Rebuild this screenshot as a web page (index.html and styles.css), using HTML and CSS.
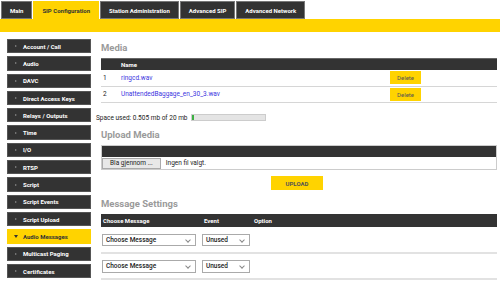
FILE: index.html
```html
<!DOCTYPE html>
<html lang="no">
<head>
    <meta charset="UTF-8">
    <title>SIP Configuration</title>
    <link rel="stylesheet" href="styles.css">
</head>
<body>
    <nav class="tabs">
        <a class="tab">Main</a>
        <a class="tab active">SIP Configuration</a>
        <a class="tab">Station Administration</a>
        <a class="tab">Advanced SIP</a>
        <a class="tab">Advanced Network</a>
    </nav>
    <div class="bar"></div>

    <div class="layout">
        <ul class="menu">
            <li>Account / Call</li>
            <li>Audio</li>
            <li>DAVC</li>
            <li>Direct Access Keys</li>
            <li>Relays / Outputs</li>
            <li>Time</li>
            <li>I/O</li>
            <li>RTSP</li>
            <li>Script</li>
            <li>Script Events</li>
            <li>Script Upload</li>
            <li class="active">Audio Messages</li>
            <li>Multicast Paging</li>
            <li>Certificates</li>
        </ul>

        <main class="content">
            <section class="block">
                <h2>Media</h2>
                <table class="grid">
                    <thead>
                        <tr><th class="num"></th><th>Name</th><th></th></tr>
                    </thead>
                    <tbody>
                        <tr>
                            <td class="num">1</td>
                            <td><a href="#">ringcd.wav</a></td>
                            <td class="act"><button class="btn">Delete</button></td>
                        </tr>
                        <tr>
                            <td class="num">2</td>
                            <td><a href="#">UnattendedBaggage_en_30_3.wav</a></td>
                            <td class="act"><button class="btn">Delete</button></td>
                        </tr>
                    </tbody>
                </table>
            </section>

            <div class="space">
                Space used: 0.505 mb of 20 mb
                <span class="meter"><span class="fill" style="width: 3%"></span></span>
            </div>

            <section class="block upload-block">
                <h2>Upload Media</h2>
                <div class="upload">
                    <div class="upload-head"></div>
                    <div class="upload-body">
                        <span class="browse">Bla gjennom ...</span>
                        <span class="nofile">Ingen fil valgt.</span>
                    </div>
                </div>
                <div class="upload-row"><button class="btn upload-btn">UPLOAD</button></div>
            </section>

            <section class="block">
                <h2>Message Settings</h2>
                <div class="msg-head">
                    <span class="c1">Choose Message</span>
                    <span class="c2">Event</span>
                    <span class="c3">Option</span>
                </div>
                <div class="msg-row">
                    <span class="select wide">Choose Message</span>
                    <span class="select narrow">Unused</span>
                </div>
                <div class="msg-row">
                    <span class="select wide">Choose Message</span>
                    <span class="select narrow">Unused</span>
                </div>
            </section>
        </main>
    </div>
</body>
</html>
```

FILE: styles.css
```css
:root {
    --yellow: #ffd300;
    --dark: #333333;
    --line: #d6d6d6;
}

* {
    margin: 0;
    padding: 0;
    box-sizing: border-box;
}

body {
    font-family: Roboto, 'Liberation Sans', sans-serif;
    font-size: 7px;
    color: #222;
    background: #fff;
    width: 500px;
    height: 284px;
    overflow: hidden;
}

.tabs {
    display: flex;
    gap: 1px;
    padding: 1px 0 0 1px;
    height: 19px;
}

.tab {
    display: flex;
    align-items: center;
    padding: 0 8px;
    height: 18px;
    background: var(--dark);
    color: #fff;
    font-weight: bold;
    font-size: 6px;
    border: 1px solid #777;
}

.tab.active {
    background: var(--yellow);
    color: #333;
    border-color: var(--yellow);
}

.bar {
    height: 13px;
    background: var(--yellow);
}

.layout {
    display: flex;
    padding: 7px 3px 0 7px;
}

.menu {
    list-style: none;
    width: 84px;
    display: flex;
    flex-direction: column;
    gap: 3px;
}

.menu li {
    height: 14.3px;
    background: var(--dark);
    border: 1px solid #555;
    color: #fff;
    font-weight: bold;
    font-size: 6px;
    display: flex;
    align-items: center;
    padding-left: 7px;
}

.menu li::before {
    content: "";
    border-left: 2px solid #888;
    border-top: 1.5px solid transparent;
    border-bottom: 1.5px solid transparent;
    margin-right: 6px;
}

.menu li.active {
    background: var(--yellow);
    border-color: var(--yellow);
    color: #333;
}

.menu li.active::before {
    border-left: 2px solid transparent;
    border-right: 2px solid transparent;
    border-top: 3px solid #333;
    border-bottom: 0;
    margin-left: -1px;
    margin-right: 5px;
}

.content {
    flex: 1;
    padding-left: 5px;
}

.block {
    padding-left: 5px;
}

h2 {
    font-size: 9.5px;
    color: #9a9a9a;
    font-weight: bold;
    height: 19px;
    padding-top: 3px;
}

.grid {
    width: 100%;
    border-collapse: collapse;
}

.grid th {
    background: var(--dark);
    color: #fff;
    font-size: 6px;
    text-align: left;
    height: 11px;
    border-top: 1px solid #666;
}

.grid td {
    height: 16.5px;
    border-bottom: 1px solid var(--line);
    font-size: 6.5px;
}

.grid .num {
    width: 20px;
    padding-left: 2px;
}

.grid a {
    color: #3b35e0;
    text-decoration: none;
}

.grid .act {
    width: 107px;
}

.btn {
    background: var(--yellow);
    border: none;
    font-family: inherit;
    font-size: 6px;
    color: #555;
    height: 13px;
    width: 31px;
}

.space {
    display: flex;
    align-items: center;
    gap: 3px;
    font-size: 6.5px;
    height: 15px;
    margin-top: 7px;
}

.meter {
    width: 75px;
    height: 7px;
    background: #e4e4e4;
    border: 1px solid #ccc;
    display: flex;
}

.fill {
    background: #3cb043;
    min-width: 1.5px;
}

.upload-block h2 {
    padding-top: 4px;
    height: 20px;
}

.upload {
    border: 1px solid #ccc;
}

.upload-head {
    height: 11px;
    background: var(--dark);
}

.upload-body {
    height: 12px;
    display: flex;
    align-items: center;
    gap: 5px;
}

.browse {
    background: #e8e8e8;
    border: 1px solid #aaa;
    height: 11px;
    padding: 0 7px;
    display: flex;
    align-items: center;
    font-size: 6.5px;
}

.nofile {
    font-size: 6.5px;
}

.upload-row {
    display: flex;
    justify-content: center;
    padding: 6px 4px 5px 0;
}

.upload-btn {
    width: 52px;
    height: 14px;
    font-weight: bold;
}

.msg-head {
    display: flex;
    background: var(--dark);
    color: #fff;
    font-weight: bold;
    font-size: 6px;
    height: 13px;
    align-items: center;
    padding-left: 2px;
}

.msg-head .c1 { width: 101px; }
.msg-head .c2 { width: 50px; }

.msg-row {
    display: flex;
    gap: 6px;
    align-items: center;
    height: 26.5px;
    padding: 1px 1px 0;
    border-bottom: 2px solid #e2e2e2;
}

.select {
    height: 12.5px;
    border: 1px solid #aaa;
    display: flex;
    align-items: center;
    padding-left: 3px;
    font-size: 6.5px;
    font-weight: 500;
    position: relative;
}

.select::after {
    content: "";
    position: absolute;
    right: 5px;
    top: 3px;
    width: 3px;
    height: 3px;
    border-right: 1px solid #888;
    border-bottom: 1px solid #888;
    transform: rotate(45deg);
}

.select.wide { width: 94px; }
.select.narrow { width: 48px; }
```
